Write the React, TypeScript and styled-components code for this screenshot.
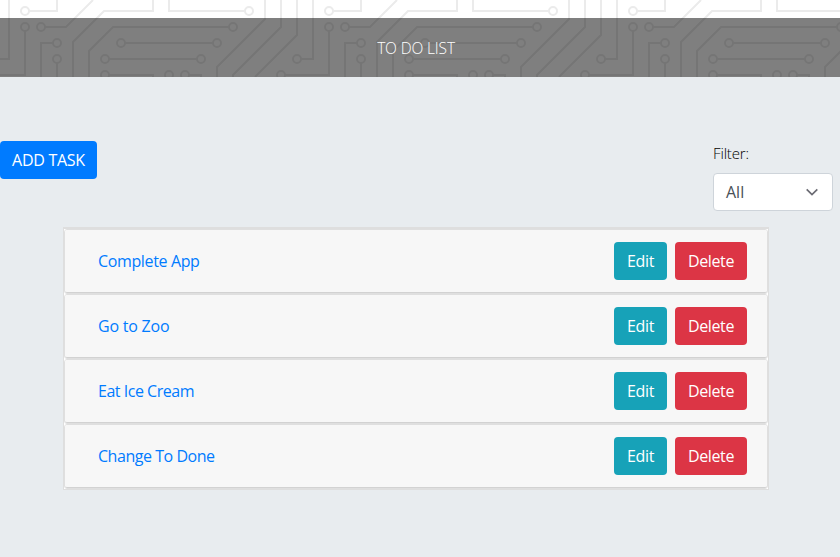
import React from "react";
import styled, { createGlobalStyle } from "styled-components";

const GlobalStyle = createGlobalStyle`
  *, *::before, *::after { box-sizing: border-box; }
  html, body { margin: 0; }
  body {
    background: #e8ecef;
    color: #212529;
    font: 400 16px/24px "Open Sans", "Noto Sans", sans-serif;
    overflow: hidden;
  }
`;

const Page = styled.div`
  width: 840px;
  height: 557px;
  display: flex;
  flex-direction: column;
  overflow: hidden;
`;

const Masthead = styled.div`
  position: relative;
  flex: none;
  height: 77px;
  padding-top: 18px;
  background: #fff;
`;

const CircuitArt = styled.svg`
  position: absolute;
  inset: 0;
  display: block;
  fill: none;
  stroke: #ebebeb;
  stroke-width: 2;
`;

const TitleBar = styled.header`
  position: relative;
  height: 59px;
  padding: 0 8px 0 0;
  display: flex;
  align-items: center;
  justify-content: center;
  background: rgba(0, 0, 0, 0.5);
`;

const Label = styled.span<{ $spacing?: number }>`
  display: inline-block;
  white-space: nowrap;
  letter-spacing: ${(p) => p.$spacing ?? 0}px;
`;

const Title = styled.h1`
  margin: 0;
  color: #fff;
  font-size: 15.5px;
  font-weight: 300;
  line-height: 24px;
`;

const Controls = styled.div`
  flex: none;
  height: 152px;
  padding: 64px 7px 0 0;
  display: flex;
  justify-content: space-between;
  align-items: flex-start;
`;

const tones = { primary: "#007bff", info: "#17a2b8", danger: "#dc3545" };

const Button = styled.button<{ $tone: keyof typeof tones; $width: number }>`
  width: ${(p) => p.$width}px;
  height: 38px;
  padding: 0;
  display: flex;
  align-items: center;
  justify-content: center;
  border: 0;
  border-radius: 4px;
  background: ${(p) => tones[p.$tone]};
  color: #fff;
  font: inherit;
  cursor: pointer;
`;

const Filter = styled.div`
  width: 120px;
  display: flex;
  flex-direction: column;
  gap: 8px;
`;

const FilterLabel = styled.label`
  color: #000;
  font-size: 15px;
  font-weight: 300;
  line-height: 24px;
`;

const Select = styled.div`
  height: 38px;
  padding: 0 14px 0 12px;
  display: flex;
  align-items: center;
  justify-content: space-between;
  border: 1px solid #ced4da;
  border-radius: 4px;
  background: #fff;
  color: #495057;
`;

const TaskList = styled.main`
  flex: none;
  width: 704px;
  margin-left: 64px;
  background: #fff;
  box-shadow: 0 0 0 1px #dedede, 0 -1px 0 1px #dedede;
`;

const Card = styled.article`
  height: 65px;
  border: 1px solid #dfdfdf;
  border-radius: 3px;
`;

const CardHeader = styled.div`
  height: 63px;
  padding: 12px 20px 12px 33px;
  display: flex;
  align-items: center;
  gap: 8px;
  border-bottom: 1px solid #d2d2d2;
  border-radius: 2px;
  background: #f7f7f7;
`;

const TaskLink = styled.a`
  flex: 1;
  color: #007bff;
`;

const tasks = [
  { name: "Complete App", spacing: -0.36 },
  { name: "Go to Zoo", spacing: -0.22 },
  { name: "Eat Ice Cream", spacing: -0.48 },
  { name: "Change To Done", spacing: -0.46 },
];

const wires = [
  "M-7 59H9V0",
  "M25 11H57V0",
  "M25 27V75H-23",
  "M41 27H66L93 0",
  "M57 43H41V77",
  "M57 59V77",
  "M73 77V42L104 11H153V0",
  "M89 77V51L113 27H233",
  "M169 0V11H249",
  "M121 43H217",
  "M105 59H201",
  "M105 75H153V77",
  "M169 75V77",
  "M185 75H201V77",
  "M265 0V19L217 67V77",
  "M281 0V27L233 75V77",
  "M297 0V35L255 77",
];

const nodes = [
  [-7, 59], [25, 11], [25, 27], [-23, 75], [41, 27], [57, 43], [57, 59],
  [233, 27], [249, 11], [121, 43], [217, 43], [105, 59], [201, 59],
  [105, 75], [169, 75], [185, 75],
];

function Circuit() {
  return (
    <CircuitArt width="840" height="77" viewBox="0 0 840 77" aria-hidden="true">
      {[0, 304, 608, 912].map((x) => (
        <g key={x} transform={`translate(${x} 0)`}>
          <path d={wires.join("")} />
          {nodes.map(([cx, cy]) => (
            <circle key={`${cx}-${cy}`} cx={cx} cy={cy} r="4" fill="#fff" />
          ))}
        </g>
      ))}
    </CircuitArt>
  );
}

export default function App() {
  return (
    <>
      <GlobalStyle />
      <Page>
        <Masthead>
          <Circuit />
          <TitleBar>
            <Title><Label $spacing={-0.15}>TO DO LIST</Label></Title>
          </TitleBar>
        </Masthead>
        <Controls>
          <Button $tone="primary" $width={97}><Label $spacing={-0.28}>ADD TASK</Label></Button>
          <Filter>
            <FilterLabel><Label $spacing={-0.15}>Filter:</Label></FilterLabel>
            <Select>
              <Label>All</Label>
              <svg width="12" height="8" viewBox="0 0 12 8" fill="none" stroke="#6b6b73" strokeWidth="1.7">
                <path d="M0.7 1.3L6 6.5L11.3 1.3" />
              </svg>
            </Select>
          </Filter>
        </Controls>
        <TaskList>
          {tasks.map((t) => (
            <Card key={t.name}>
              <CardHeader>
                <TaskLink><Label $spacing={t.spacing}>{t.name}</Label></TaskLink>
                <Button $tone="info" $width={53}><Label $spacing={-0.3}>Edit</Label></Button>
                <Button $tone="danger" $width={72}><Label $spacing={-0.38}>Delete</Label></Button>
              </CardHeader>
            </Card>
          ))}
        </TaskList>
      </Page>
    </>
  );
}
